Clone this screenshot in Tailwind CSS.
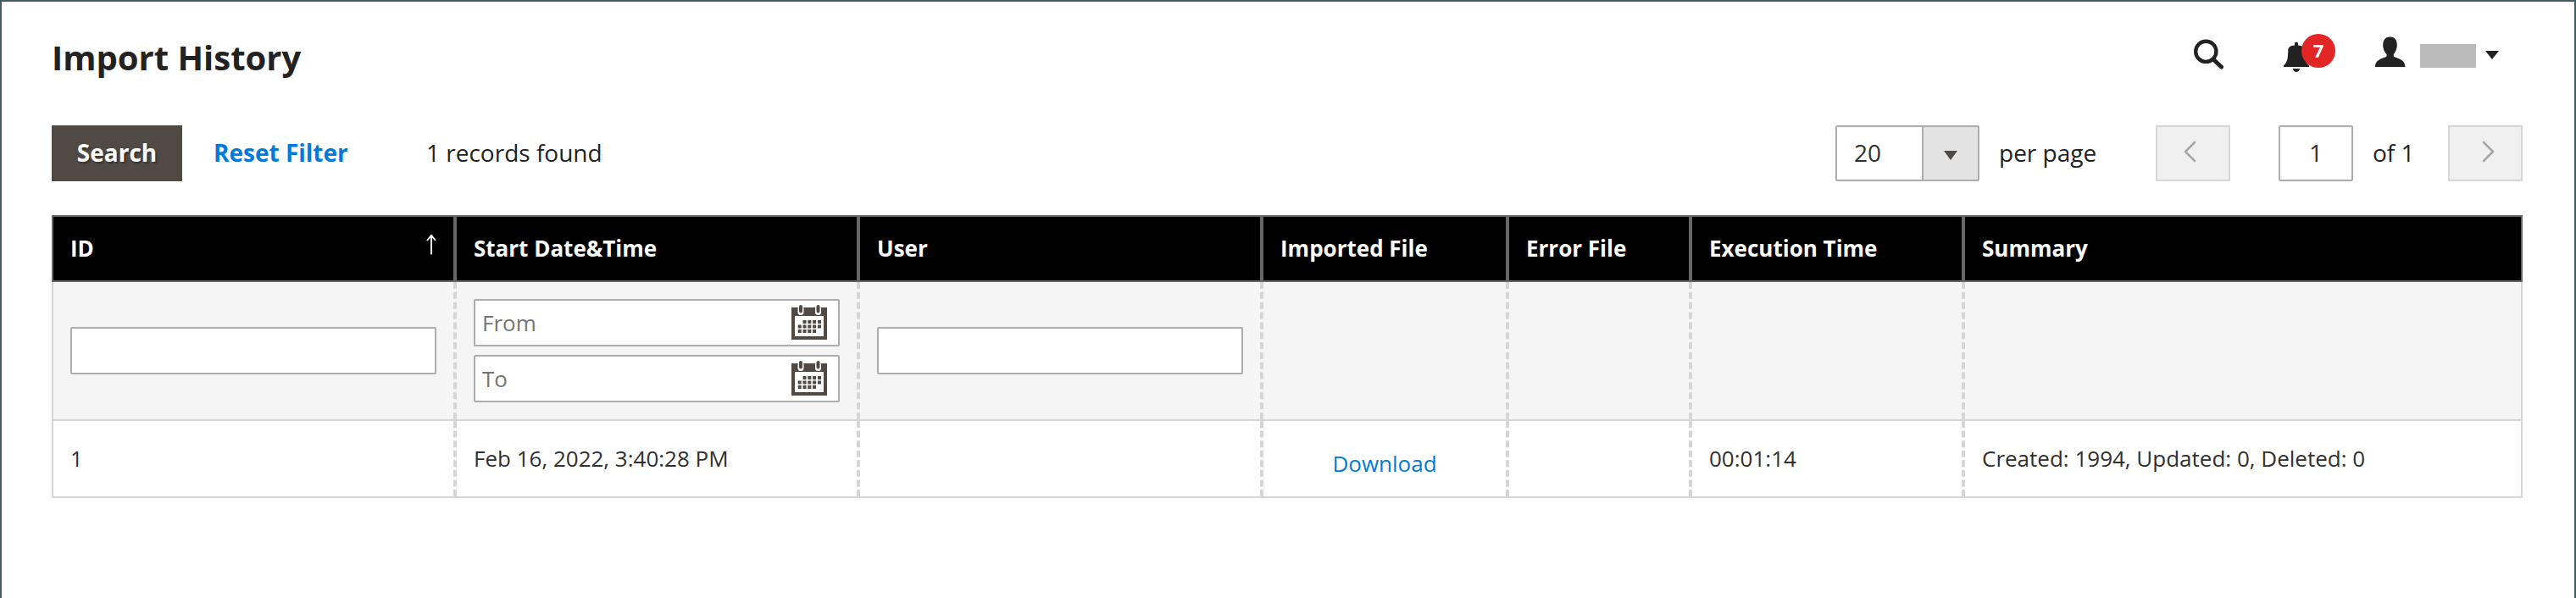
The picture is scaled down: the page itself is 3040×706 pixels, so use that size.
<!DOCTYPE html>
<html lang="en">
<head>
<meta charset="utf-8">
<title>Import History</title>
<script src="https://cdn.jsdelivr.net/npm/@tailwindcss/browser@4"></script>
</head>
<body class="bg-white">
<svg class="hidden">
  <symbol id="calendar" viewBox="0 0 42 42">
    <path fill="#514943" d="M0 3h42v38H0z"/>
    <path fill="#fff" d="M4 13h34v24H4z"/>
    <path fill="none" stroke="#fff" stroke-width="7" stroke-linecap="round" d="M11 5v3.500M31.500 5v3.500"/>
    <path fill="none" stroke="#514943" stroke-width="4" stroke-linecap="round" d="M11 2v5.500M31.500 2v5.500"/>
    <path fill="#514943" d="M13.500 18h4v4h-4zM19.300 18h4v4h-4zM25.100 18h4v4h-4zM31 18h4v4h-4zM7.700 23.500h4v4h-4zM13.500 23.500h4v4h-4zM19.300 23.500h4v4h-4zM25.100 23.500h4v4h-4zM31 23.500h4v4h-4zM7.700 29h4v4h-4zM13.500 29h4v4h-4zM19.300 29h4v4h-4zM25.100 29h4v4h-4z"/>
  </symbol>
</svg>
<div class="h-[706px] w-[3040px] overflow-hidden border-x-2 border-t-2 border-[#465a64] pl-[59px] pr-[61px] font-['Open_Sans',sans-serif] text-[28px] leading-[38px] text-[#222]">
  <header class="flex h-[146px] items-start justify-between">
    <h1 class="mt-[38px] text-[40px] leading-[55px] font-bold">Import History</h1>
    <div class="mr-[28px] flex items-start">
      <svg class="mt-[44px] h-[36px] w-[36px]" viewBox="0 0 36 36" fill="none" stroke="#222"><circle cx="14.300" cy="14.800" r="12.100" stroke-width="4.400"/><path stroke-width="5" stroke-linecap="round" d="M23.500 24.500l9 8.500"/></svg>
      <div class="relative ml-[70px] mt-[47px] h-[36px] w-[61px]">
        <svg class="h-[36px] w-[30px]" viewBox="0 0 30 36" fill="#222"><path d="M13 2c0-1.700 4-1.700 4 0v2.500c5 .5 7 2 7.500 5.500.3 12 1.500 14 5.500 18.500V30H0v-1.500C4 24 5 22 5.300 10 5.500 6.500 8 5 13 4.500zM11 32h8c-.5 5.300-7.500 5.300-8 0z"/></svg>
        <span class="absolute top-[-9px] left-[21px] flex size-[40px] items-center justify-center rounded-full bg-[#e22626] pb-[2px] text-[22px] leading-[30px] font-bold text-white">7</span>
      </div>
      <svg class="ml-[47px] mt-[41px] h-[36px] w-[36px]" viewBox="0 0 36 36" fill="#222"><path d="M17.500.5c5.500 0 8.300 4 8.300 9.500 0 5-2.300 9-4 11v2.500c1.500 2 13.700 2.500 13.700 12.500H0C0 26 12 25.500 13.500 23.500V21c-2-2-4.300-6-4.300-11C9.200 4.500 12 .5 17.500.5z"/></svg>
      <span class="ml-[17px] mt-[50px] h-[28px] w-[66px] bg-[#bababa]"></span>
      <svg class="ml-[11px] mt-[58px] h-[10px] w-[16px]" viewBox="0 0 16 10" fill="#222"><path d="M0 0h16L8 10z"/></svg>
    </div>
  </header>

  <div class="flex h-[66px] items-center">
    <button class="h-[66px] w-[154px] bg-[#514943] pb-[2px] font-bold text-white [text-shadow:2px_2px_2px_rgba(0,0,0,0.3)]">Search</button>
    <a class="ml-[37px] w-[160px] pb-[2px] font-bold whitespace-nowrap text-[#007bdb]">Reset Filter</a>
    <span class="ml-[91px] pb-[2px]">1 records found</span>
    <div class="ml-auto flex items-center">
      <div class="flex h-[66px] w-[170px] rounded-[2px] border-2 border-[#adadad] text-[#303030]">
        <span class="flex flex-1 items-center pb-[2px] pl-5">20</span>
        <span class="flex w-[66px] items-center justify-center border-l-2 border-[#adadad] bg-[#e3e3e3]"><svg class="mt-1 h-[11px] w-[16px]" viewBox="0 0 16 11" fill="#514943"><path d="M0 0h16L8 11z"/></svg></span>
      </div>
      <span class="ml-[23px] w-[119px] pb-[2px] whitespace-nowrap">per page</span>
      <span class="ml-[66px] flex h-[66px] w-[88px] items-center justify-center border-2 border-[#d6d6d6] bg-[#f0f0f0]"><svg class="mr-[7px] mb-[4px] h-[26px] w-[15px]" viewBox="0 0 15 26" fill="none" stroke="#a8a6a5" stroke-width="2.600" stroke-linecap="round" stroke-linejoin="round"><path d="M13 2L2 13l11 11"/></svg></span>
      <span class="ml-[57px] flex h-[66px] w-[88px] items-center justify-center rounded-[2px] border-2 border-[#adadad] pb-[2px] text-[#303030]">1</span>
      <span class="ml-[23px] w-[48px] pb-[2px] whitespace-nowrap">of 1</span>
      <span class="ml-[41px] flex h-[66px] w-[88px] items-center justify-center border-2 border-[#d6d6d6] bg-[#f0f0f0]"><svg class="ml-[7px] mb-[4px] h-[26px] w-[15px]" viewBox="0 0 15 26" fill="none" stroke="#a8a6a5" stroke-width="2.600" stroke-linecap="round" stroke-linejoin="round"><path d="M2 2l11 11L2 24"/></svg></span>
    </div>
  </div>

  <div class="mt-[40px] w-[2916px] text-[26px] leading-[36px] text-[#303030]">
    <div class="grid h-[79px] grid-cols-[476px_476px_476px_290px_216px_322px_656px] border-2 border-[#666] bg-black font-bold text-white *:flex *:items-center *:border-r-4 *:border-[#666] *:pb-px *:pl-5">
      <div class="justify-between">ID<svg class="mr-[20px] mb-[8px] h-[26px] w-[12px]" viewBox="0 0 12 26" fill="none" stroke="#fff" stroke-width="1.800"><path d="M6 1.500v23M1 8L6 2l5 6"/></svg></div>
      <div>Start Date&amp;Time</div><div>User</div><div>Imported File</div><div>Error File</div><div>Execution Time</div><div class="!border-r-0">Summary</div>
    </div>
    <div class="grid h-[164px] grid-cols-[476px_476px_476px_290px_216px_322px_656px] border-x-2 border-b-2 border-[#d6d6d6] bg-[#f5f5f5]">
      <div class="flex items-center border-r-4 border-dashed border-[#d6d6d6] px-5"><div class="h-[56px] flex-1 rounded-[2px] border-2 border-[#adadad] bg-white"></div></div>
      <div class="flex flex-col justify-center gap-[10px] border-r-4 border-dashed border-[#d6d6d6] px-5 text-[#757575]">
        <div class="flex h-[56px] items-center justify-between rounded-[2px] border-2 border-[#adadad] bg-white pl-2 pr-[13px]">From<svg class="size-[42px]"><use href="#calendar"/></svg></div>
        <div class="flex h-[56px] items-center justify-between rounded-[2px] border-2 border-[#adadad] bg-white pl-2 pr-[13px]">To<svg class="size-[42px]"><use href="#calendar"/></svg></div>
      </div>
      <div class="flex items-center border-r-4 border-dashed border-[#d6d6d6] px-5"><div class="h-[56px] flex-1 rounded-[2px] border-2 border-[#adadad] bg-white"></div></div>
      <div class="border-r-4 border-dashed border-[#d6d6d6]"></div>
      <div class="border-r-4 border-dashed border-[#d6d6d6]"></div>
      <div class="border-r-4 border-dashed border-[#d6d6d6]"></div>
      <div></div>
    </div>
    <div class="grid h-[91px] grid-cols-[476px_476px_476px_290px_216px_322px_656px] border-x-2 border-b-2 border-[#d6d6d6] *:border-r-4 *:border-dashed *:border-[#d6d6d6] *:px-5 *:pt-[26px]">
      <div>1</div><div>Feb 16, 2022, 3:40:28 PM</div><div></div><div class="!pt-[32px] text-center text-[#007bdb]">Download</div><div></div><div>00:01:14</div><div class="!border-r-0">Created: 1994, Updated: 0, Deleted: 0</div>
    </div>
  </div>
</div>
</body>
</html>
